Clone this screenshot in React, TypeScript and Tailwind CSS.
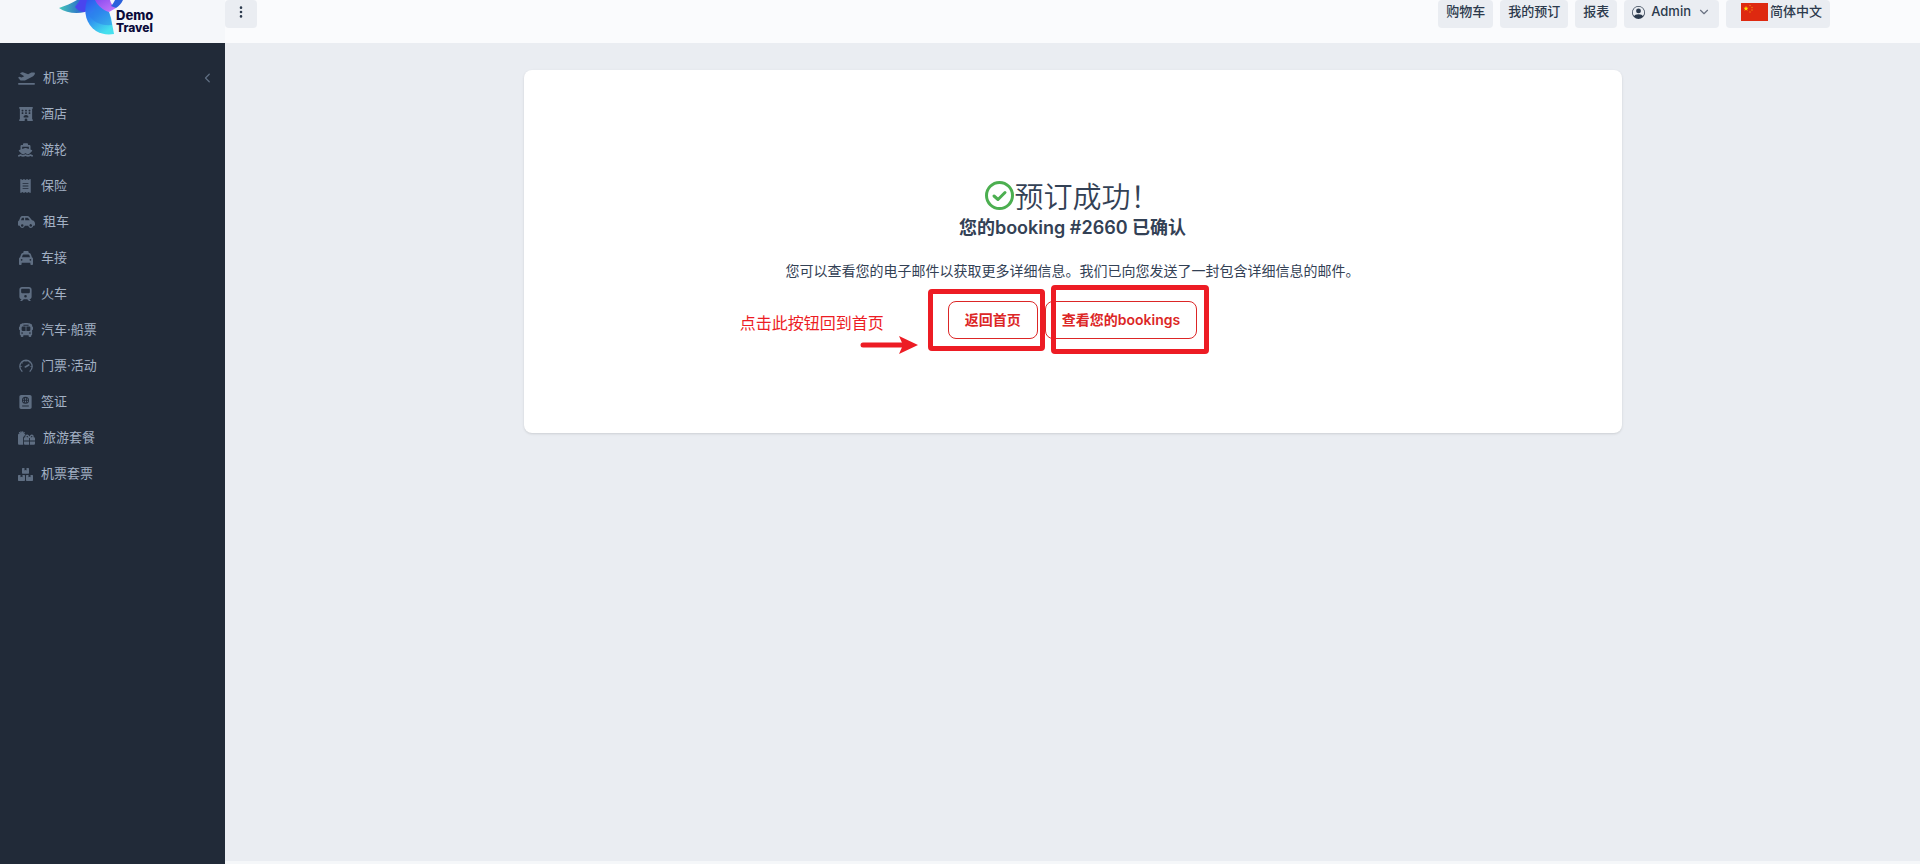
import { ReactNode } from 'react';
import {
  FaPlaneDeparture,
  FaHotel,
  FaShip,
  FaReceipt,
  FaCarSide,
  FaTaxi,
  FaTrain,
  FaPassport,
  FaGifts,
  FaChevronLeft,
} from 'react-icons/fa6';
import { FaBusAlt } from 'react-icons/fa';
import { BsPersonCircle, BsThreeDotsVertical } from 'react-icons/bs';
import { ChevronDown } from 'lucide-react';

function GaugeIcon() {
  return (
    <svg viewBox="0 0 14 14" className="h-[14px] w-[14px]" fill="none" stroke="currentColor" strokeLinecap="round">
      <path d="M3 12.2 A6.2 6.2 0 1 1 11 12.2" strokeWidth="1.3" />
      <path d="M7 1.5V2.6 M2.8 3.4L3.6 4.1 M11.2 3.4L10.6 4 M1.5 7.5H2.4 M11.7 7.5H12.5" strokeWidth="0.8" />
      <path d="M6.3 7.9 L9.8 6" strokeWidth="1.7" />
    </svg>
  );
}

function BoxesIcon() {
  return (
    <svg viewBox="0 0 15 13" className="h-[13px] w-[15px]" fill="currentColor">
      <path d="M4.6 0H6.5V2.4L7.5 1.9L8.5 2.4V0H10.4Q11 0 11 0.7V5Q11 5.7 10.4 5.7H4.6Q4 5.7 4 5V0.7Q4 0 4.6 0Z" />
      <path d="M0.7 6.9H2.5V9.3L3.5 8.8L4.5 9.3V6.9H6.3Q7 6.9 7 7.6V12.3Q7 13 6.3 13H0.7Q0 13 0 12.3V7.6Q0 6.9 0.7 6.9Z" />
      <path d="M8.7 6.9H10.5V9.3L11.5 8.8L12.5 9.3V6.9H14.3Q15 6.9 15 7.6V12.3Q15 13 14.3 13H8.7Q8 13 8 12.3V7.6Q8 6.9 8.7 6.9Z" />
    </svg>
  );
}

const menu: { label: string; icon: ReactNode; expandable?: boolean }[] = [
  { label: '机票', icon: <FaPlaneDeparture className="w-[17px] h-[14px]" />, expandable: true },
  { label: '酒店', icon: <FaHotel className="w-[14px] h-[14px]" /> },
  { label: '游轮', icon: <FaShip className="w-[15px] h-[14px]" /> },
  { label: '保险', icon: <FaReceipt className="w-[11px] h-[14px]" /> },
  { label: '租车', icon: <FaCarSide className="w-[17px] h-[14px]" /> },
  { label: '车接', icon: <FaTaxi className="w-[14px] h-[14px]" /> },
  { label: '火车', icon: <FaTrain className="w-[13px] h-[14px]" /> },
  { label: '汽车·船票', icon: <FaBusAlt className="w-[14px] h-[14px]" /> },
  { label: '门票·活动', icon: <GaugeIcon /> },
  { label: '签证', icon: <FaPassport className="w-[13px] h-[14px]" /> },
  { label: '旅游套餐', icon: <FaGifts className="w-[17px] h-[14px]" /> },
  { label: '机票套票', icon: <BoxesIcon /> },
];

const navButton =
  'h-7 flex items-center rounded bg-[#eaedf2] px-2 pb-1 text-[13px] font-medium text-[#2c3a4d] hover:bg-gray-200';

function Logo() {
  return (
    <svg viewBox="0 0 100 36" className="w-[100px] h-9" role="img" aria-label="Demo Travel">
      <defs>
        <linearGradient id="wing" x1="0" y1="0" x2="1" y2="0">
          <stop offset="0" stopColor="#45c9b8" />
          <stop offset="0.5" stopColor="#2f78c8" />
          <stop offset="1" stopColor="#3a50f0" />
        </linearGradient>
        <linearGradient id="body" x1="0" y1="0" x2="0.6" y2="1">
          <stop offset="0" stopColor="#2f55f0" />
          <stop offset="0.5" stopColor="#2f8df0" />
          <stop offset="1" stopColor="#45e0ee" />
        </linearGradient>
        <linearGradient id="neck" x1="0" y1="0" x2="1" y2="1">
          <stop offset="0" stopColor="#8a4bf0" />
          <stop offset="1" stopColor="#c77bfa" />
        </linearGradient>
      </defs>
      <path d="M0 8 C6 6 13 3 18 0 H38 L26 12 C17 14 7 13 0 8Z" fill="url(#wing)" />
      <path d="M16 7 C18 4 20 2 21 0 H38 L26 12 C22 12 18 10 16 7Z" fill="#4a45ee" />
      <path d="M28 0 C24 12 27 24 37 31 C42 34 48 35 55 34 L52 18 L50 12 L38 0Z" fill="url(#body)" />
      <path d="M30 15 C34 22 42 26 53 25 L50 12 L38 0 H36 C38 8 35 13 30 15Z" fill="#2b7fe8" opacity="0.45" />
      <path d="M36 0 C39 6 44 10 50 12 L57 8 C54 6 52 4 51 0Z" fill="url(#neck)" />
      <path d="M52 6 C54 4 55 2 56 0 H64 C62 4 60 6 57 8Z" fill="#2b62dc" />
      <text x="57" y="20" fontSize="13" className="font-extrabold" fill="#0b0b3b" fontFamily="Inter, sans-serif">Demo</text>
      <text x="57" y="32" fontSize="12" className="font-extrabold" fill="#0b0b3b" fontFamily="Inter, sans-serif">Travel</text>
    </svg>
  );
}

function ChinaFlag() {
  return (
    <svg viewBox="0 0 27 18" className="w-[27px] h-[18px]" aria-hidden="true">
      <rect width="27" height="18" fill="#de2910" />
      <path d="M5 3 L5.7 4.8 H7.5 L6 6 L6.6 7.8 L5 6.7 L3.4 7.8 L4 6 L2.5 4.8 H4.3Z" fill="#ffde00" />
      <g fill="#f08a10">
        <circle cx="9" cy="2.5" r="0.7" />
        <circle cx="11" cy="4.5" r="0.7" />
        <circle cx="11" cy="7" r="0.7" />
        <circle cx="9" cy="9" r="0.7" />
      </g>
    </svg>
  );
}

function Header() {
  return (
    <header className="flex h-[43px] items-start bg-[#fafbfd]">
      <div className="flex h-full w-[225px] shrink-0 justify-center bg-[#f5f7fa]">
        <a href="#" className="-ml-2">
          <Logo />
        </a>
      </div>
      <button type="button" aria-label="菜单" className="flex h-7 w-8 justify-center rounded bg-[#eaedf2] pt-[5px] text-[#2c3a4d]">
        <BsThreeDotsVertical className="h-[14px] w-[14px]" />
      </button>
      <nav className="ml-auto mr-[90px] flex gap-[7px]">
        <button type="button" className={navButton}>购物车</button>
        <button type="button" className={navButton}>我的预订</button>
        <button type="button" className={navButton}>报表</button>
        <button type="button" className={`${navButton} gap-1.5`}>
          <BsPersonCircle className="h-[13px] w-[13px]" />
          <span>Admin</span>
          <ChevronDown className="h-[14px] w-[14px] text-gray-500" />
        </button>
        <button type="button" className={`${navButton} gap-0.5 pl-[15px]`}>
          <ChinaFlag />
          简体中文
        </button>
      </nav>
    </header>
  );
}

function Sidebar() {
  return (
    <aside className="w-[225px] shrink-0 bg-[#212a38] pt-[17px]">
      <ul>
        {menu.map((item) => (
          <li key={item.label}>
            <a href="#" className="flex h-9 items-center gap-2 pl-[18px] pr-3 text-[13px] text-[#a3b1c4] hover:text-white">
              <span className="flex min-w-[15px] justify-center text-[#5f6e82]">{item.icon}</span>
              {item.label}
              {item.expandable && <FaChevronLeft className="ml-auto h-2.5 w-2.5 text-[#5f6e82]" />}
            </a>
          </li>
        ))}
      </ul>
    </aside>
  );
}

// Red callouts drawn over the action buttons
function Callouts() {
  return (
    <div className="pointer-events-none absolute inset-0 text-[#ed1c24]">
      <div className="absolute -left-5 -top-3 h-[62px] w-[117px] rounded-sm border-5 border-current" />
      <div className="absolute -right-3 -top-4 h-[69px] w-[158px] rounded-sm border-5 border-current" />
      <p className="absolute right-full top-2.5 mr-16 whitespace-nowrap text-base">点击此按钮回到首页</p>
      <svg viewBox="0 0 58 18" className="absolute right-full top-[35px] mr-[30px] h-[18px] w-[58px]" aria-hidden="true">
        <path d="M3 9 H44" stroke="currentColor" strokeWidth="5" strokeLinecap="round" />
        <path d="M39 0 L58 9 L39 18 L43 9Z" fill="currentColor" />
      </svg>
    </div>
  );
}

export default function App() {
  const actionButton = 'h-[38px] rounded-lg border border-[#dc2626] px-4 text-sm font-semibold text-[#dc2626] hover:bg-red-50';

  return (
    <div className="flex min-h-screen flex-col font-[Inter,'Noto_Sans_CJK_SC',sans-serif]">
      <Header />
      <div className="flex grow">
        <Sidebar />
        <div className="flex grow flex-col bg-[#eaedf2]">
          <main className="grow px-6 pt-[27px]">
            <section className="mx-auto flex max-w-[1098px] flex-col items-center rounded-lg bg-white pb-[94px] pt-[104px] text-[#334155] shadow-sm">
              <h1 className="flex items-center font-['Noto_Sans_CJK_SC',sans-serif] text-[29px] font-[350] leading-[42px]">
                <svg viewBox="0 0 29 29" className="h-[29px] w-[29px]" fill="none" stroke="#4caf50" aria-hidden="true">
                  <circle cx="14.5" cy="14.5" r="13" strokeWidth="3" />
                  <path d="M9 15 L13 18.5 L20 11.5" strokeWidth="3" strokeLinecap="round" strokeLinejoin="round" />
                </svg>
                预订成功！
              </h1>
              <h2 className="text-lg font-semibold leading-6">您的booking #2660 已确认</h2>
              <p className="mt-5 text-sm leading-[22px]">您可以查看您的电子邮件以获取更多详细信息。我们已向您发送了一封包含详细信息的邮件。</p>
              <div className="relative mt-[19px] flex gap-[7px]">
                <button type="button" className={actionButton}>返回首页</button>
                <button type="button" className={actionButton}>查看您的bookings</button>
                <Callouts />
              </div>
            </section>
          </main>
          <footer className="h-[3px] bg-[#f5f7f9]" />
        </div>
      </div>
    </div>
  );
}
